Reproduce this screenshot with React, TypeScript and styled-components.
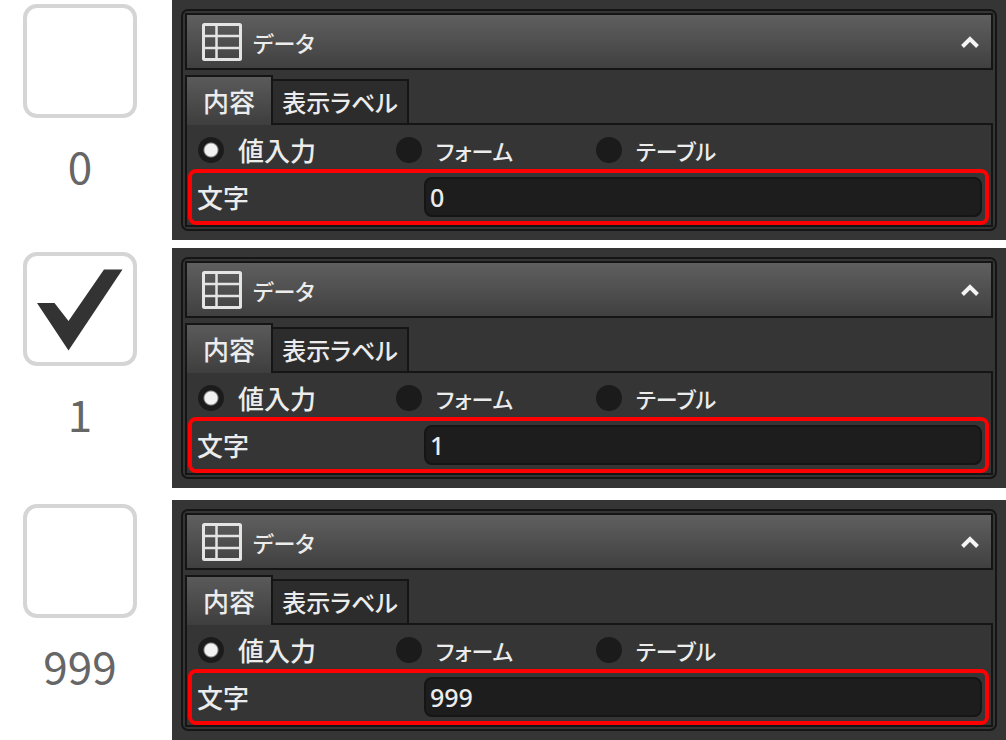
import React, { useId, useState } from "react";
import styled, { createGlobalStyle } from "styled-components";

const GlobalStyle = createGlobalStyle`
  * {
    box-sizing: border-box;
  }
  body {
    margin: 0;
    background: #ffffff;
  }
  body, button, input {
    font-family: "Noto Sans CJK JP", sans-serif;
  }
`;

const line = "#151515";
const panelBg = "#353535";
const textColor = "#ececec";

const Page = styled.main`
  display: flex;
  flex-direction: column;
`;

const Example = styled.section<{ $space: number }>`
  display: grid;
  grid-template-columns: 160px minmax(0, 1fr);
  column-gap: 12px;
  margin-top: ${(p) => p.$space}px;
`;

const Sample = styled.label`
  display: flex;
  flex-direction: column;
  align-items: center;
  gap: 17px;
  padding-top: 4px;
  color: #666666;
  font-size: 44px;
  line-height: 60px;
`;

const CheckBox = styled.span`
  position: relative;
  display: block;
  width: 114px;
  height: 114px;
`;

const CheckInput = styled.input`
  appearance: none;
  display: block;
  width: 100%;
  height: 100%;
  margin: 0;
  border: 4px solid #d5d5d5;
  border-radius: 14px;
  background: #ffffff;
`;

const CheckMark = styled.svg`
  position: absolute;
  inset: 0;
  pointer-events: none;
`;

const Panel = styled.div`
  padding: 9px;
  background: ${panelBg};
  font-weight: 500;
`;

const Frame = styled.div`
  padding: 2px;
  border: 2px solid ${line};
  border-radius: 7px;
`;

const Header = styled.button`
  display: flex;
  align-items: center;
  gap: 11px;
  width: 100%;
  height: 57px;
  padding: 0 12px 0 15px;
  border: 2px solid ${line};
  background: linear-gradient(#5f5f5f, #404040);
  color: ${textColor};
  font-size: 22px;
  font-weight: 500;
  line-height: 36px;
  font-feature-settings: "palt";
  text-align: left;
`;

const HeaderTitle = styled.span`
  flex: 1;
`;

const TabBar = styled.div`
  display: flex;
  align-items: flex-end;
  margin-top: 5px;
`;

const Tab = styled.button<{ $active: boolean }>`
  position: relative;
  height: ${(p) => (p.$active ? 50 : 46)}px;
  width: ${(p) => (p.$active ? 88 : 136)}px;
  margin-bottom: -2px;
  padding: 0;
  border: solid ${line};
  border-width: ${(p) => (p.$active ? "2px 2px 0 2px" : "2px 2px 2px 0")};
  background: ${(p) => (p.$active ? "linear-gradient(#5a5a5a, #3e3e3e)" : "#2c2c2c")};
  color: ${textColor};
  font-size: ${(p) => (p.$active ? 26 : 24)}px;
  font-weight: 500;
  line-height: 36px;
  font-feature-settings: "palt";
  white-space: nowrap;
`;

const Body = styled.div`
  border: 2px solid ${line};
`;

const RadioRow = styled.div`
  display: grid;
  grid-template-columns: 198px 200px minmax(0, 1fr);
  height: 44px;
  padding: 6px 0 0 11px;
`;

const RadioLabel = styled.label<{ $kana: boolean }>`
  display: flex;
  align-items: center;
  gap: 14px;
  height: 38px;
  color: ${textColor};
  font-size: ${(p) => (p.$kana ? 22 : 26)}px;
  line-height: 38px;
  font-feature-settings: "palt";
`;

const Radio = styled.input`
  appearance: none;
  width: 26px;
  height: 26px;
  margin: 0;
  border-radius: 50%;
  background: #1b1b1b;

  &:checked {
    background: radial-gradient(circle, #f2f2f2 6px, #1b1b1b 8px);
  }
`;

const Field = styled.div`
  display: flex;
  align-items: center;
  height: 56px;
  margin: 0 2px 0 1px;
  padding: 0 3px 0 5px;
  border: 4px solid #ff0000;
  border-radius: 8px;
`;

const FieldLabel = styled.label`
  width: 227px;
  color: ${textColor};
  font-size: 26px;
  line-height: 40px;
`;

const FieldInput = styled.input`
  flex: 1;
  min-width: 0;
  height: 40px;
  padding: 0 4px;
  border: 2px solid #151515;
  border-radius: 8px;
  background: #1d1d1d;
  color: ${textColor};
  font-family: "Noto Sans", sans-serif;
  font-size: 25px;
  font-weight: 500;
  line-height: 36px;
`;

const TableIcon = () => (
  <svg width="40" height="38" viewBox="0 0 40 38" fill="none" stroke="#e4e4e4" aria-hidden="true">
    <rect x="1.5" y="1.5" width="37" height="35" rx="1" strokeWidth="3" />
    <path d="M1.5 13H38.5M1.5 25H38.5M14.5 1.5V36.5" strokeWidth="2.5" />
  </svg>
);

const ChevronUp = () => (
  <svg width="18" height="14" viewBox="0 0 18 14" fill="none" stroke="#f4f4f4" strokeWidth="4" aria-hidden="true">
    <path d="M1.5 11.5L9 4L16.5 11.5" />
  </svg>
);

const tabs = ["内容", "表示ラベル"];
const modes = [
  { name: "値入力", kana: false },
  { name: "フォーム", kana: true },
  { name: "テーブル", kana: true },
];

function DataPanel({ value, onChange }: { value: string; onChange: (v: string) => void }) {
  const id = useId();
  const [mode, setMode] = useState(modes[0].name);
  return (
    <Panel>
      <Frame>
        <Header type="button" aria-expanded="true">
          <TableIcon />
          <HeaderTitle>データ</HeaderTitle>
          <ChevronUp />
        </Header>
        <TabBar role="tablist">
          {tabs.map((t, i) => (
            <Tab key={t} type="button" role="tab" aria-selected={i === 0} $active={i === 0}>
              {t}
            </Tab>
          ))}
        </TabBar>
        <Body>
          <RadioRow>
            {modes.map((m) => (
              <RadioLabel key={m.name} $kana={m.kana}>
                <Radio
                  type="radio"
                  name={`${id}-mode`}
                  checked={mode === m.name}
                  onChange={() => setMode(m.name)}
                />
                {m.name}
              </RadioLabel>
            ))}
          </RadioRow>
          <Field>
            <FieldLabel htmlFor={`${id}-text`}>文字</FieldLabel>
            <FieldInput id={`${id}-text`} type="text" value={value} onChange={(e) => onChange(e.target.value)} />
          </Field>
        </Body>
      </Frame>
    </Panel>
  );
}

function CheckExample({ initial, space }: { initial: string; space: number }) {
  const [value, setValue] = useState(initial);
  const checked = value === "1";
  return (
    <Example $space={space}>
      <Sample>
        <CheckBox>
          <CheckInput type="checkbox" checked={checked} onChange={(e) => setValue(e.target.checked ? "1" : "0")} />
          {checked && (
            <CheckMark width="114" height="114" viewBox="0 0 114 114" aria-hidden="true">
              <path d="M14 51H31.5L45.5 69L81 17.5H99.5L45.5 98.5Z" fill="#333333" />
            </CheckMark>
          )}
        </CheckBox>
        {value}
      </Sample>
      <DataPanel value={value} onChange={setValue} />
    </Example>
  );
}

export default function App() {
  return (
    <>
      <GlobalStyle />
      <Page>
        <CheckExample initial="0" space={0} />
        <CheckExample initial="1" space={8} />
        <CheckExample initial="999" space={12} />
      </Page>
    </>
  );
}
